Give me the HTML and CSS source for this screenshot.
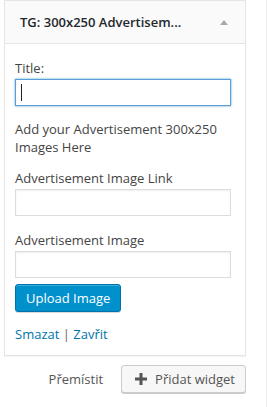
FILE: index.html
```html
<!DOCTYPE html>
<html>
<head>
  <title>Widget</title>
  <link rel="stylesheet" href="styles.css">
</head>
<body>
  <div class="sidebar">
    <div class="widget">
      <div class="widget-top">
        <div class="widget-title">TG: 300x250 Advertisem...</div>
        <div class="widget-toggle"></div>
      </div>

      <div class="widget-inside">
        <label class="field-label" for="title">Title:</label>
        <div class="input-wrap">
          <input id="title" class="field-input focused" type="text">
          <span class="caret"></span>
        </div>

        <p class="widget-desc">Add your Advertisement 300x250 Images Here</p>

        <label class="field-label" for="link">Advertisement Image Link</label>
        <input id="link" class="field-input" type="text">

        <label class="field-label spaced" for="image">Advertisement Image</label>
        <input id="image" class="field-input" type="text">

        <button class="button-primary" type="button">Upload Image</button>

        <div class="widget-control">
          <a href="#">Smazat</a> <span class="sep">|</span> <a href="#">Zavřit</a>
        </div>
      </div>
    </div>

    <div class="widget-actions">
      <span class="move-link">Přemístit</span>
      <button class="button-add" type="button">
        <svg width="12" height="12" viewBox="0 0 12 12"><path d="M4.5 0h3v4.5H12v3H7.5V12h-3V7.5H0v-3h4.5z" fill="#555"/></svg>
        Přidat widget
      </button>
    </div>
  </div>
</body>
</html>
```

FILE: styles.css
```css
* {
  margin: 0;
  padding: 0;
  box-sizing: border-box;
}

body {
  font-family: "Open Sans", sans-serif;
  font-size: 13px;
  color: #444;
  background: #fff;
  width: 268px;
  height: 407px;
  overflow: hidden;
}

.sidebar {
  width: 267px;
  height: 407px;
  border-right: 1px solid #eee;
  padding-left: 4px;
}

.widget {
  width: 242px;
  border: 1px solid #e5e5e5;
  background: #fff;
  box-shadow: 0 1px 1px rgba(0,0,0,0.04);
}

.widget-top {
  height: 43px;
  background: #fafafa;
  border-bottom: 1px solid #e5e5e5;
  display: flex;
  align-items: center;
  justify-content: space-between;
  padding: 0 17px 0 15px;
}

.widget-title {
  font-size: 13px;
  font-weight: 600;
  color: #23282d;
}

.widget-toggle {
  width: 0;
  height: 0;
  border-left: 4px solid transparent;
  border-right: 4px solid transparent;
  border-bottom: 5px solid #aaa;
}

.widget-inside {
  padding: 15px 10px 12px;
}

.field-label {
  display: block;
  line-height: 18px;
  margin-bottom: 2px;
}

.input-wrap {
  position: relative;
}

.caret {
  position: absolute;
  left: 6px;
  top: 5px;
  width: 1px;
  height: 17px;
  background: #222;
}

.field-input {
  display: block;
  width: 216px;
  height: 27px;
  border: 1px solid #ddd;
  box-shadow: inset 0 1px 2px rgba(0,0,0,0.07);
  background: #fff;
  font-family: inherit;
  font-size: 13px;
  padding: 0 6px;
}

.field-input.focused {
  border-color: #5b9dd9;
  box-shadow: 0 0 2px rgba(30,140,190,0.8);
}

.widget-desc {
  line-height: 18px;
  margin: 14px 0 13px;
}

.field-label.spaced {
  margin-top: 15px;
}

.button-primary {
  display: block;
  margin-top: 6px;
  height: 28px;
  padding: 0 10px;
  background: #0091cd;
  border: 1px solid #0073aa;
  border-radius: 3px;
  box-shadow: inset 0 1px 0 rgba(120,200,230,0.5), 0 1px 0 rgba(0,0,0,0.15);
  color: #fff;
  font-family: inherit;
  font-size: 13px;
}

.widget-control {
  margin-top: 13px;
  line-height: 18px;
}

.widget-control a {
  color: #0073aa;
  text-decoration: none;
}

.sep {
  color: #666;
}

.widget-actions {
  width: 242px;
  display: flex;
  justify-content: flex-end;
  align-items: center;
  gap: 18px;
  margin-top: 9px;
}

.move-link {
  color: #555;
}

.button-add {
  display: flex;
  align-items: center;
  gap: 8px;
  height: 28px;
  padding: 0 10px 1px 13px;
  background: #f7f7f7;
  border: 1px solid #ccc;
  border-radius: 3px;
  box-shadow: 0 1px 0 #ccc;
  color: #555;
  font-family: inherit;
  font-size: 13px;
}
```
